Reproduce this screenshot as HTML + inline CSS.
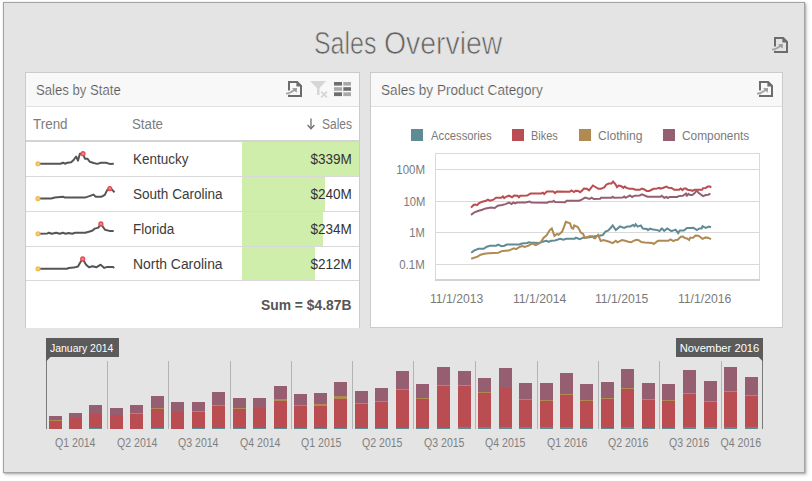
<!DOCTYPE html>
<html><head><meta charset="utf-8"><title>Sales Overview</title><style>
html,body{margin:0;padding:0;background:#ffffff;width:812px;height:481px;overflow:hidden;position:relative;font-family:"Liberation Sans", sans-serif;}
#frame{position:absolute;left:3px;top:2px;width:802px;height:471px;box-sizing:border-box;border:1px solid #a3a3a3;background:#e4e4e4;box-shadow:1px 1px 2px rgba(0,0,0,0.25),2px 2px 4px rgba(0,0,0,0.12),0 0 2px rgba(0,0,0,0.08);}
.t{position:absolute;white-space:nowrap;line-height:1;font-family:"Liberation Sans", sans-serif;}
.panel{position:absolute;box-sizing:border-box;border:1px solid #cbcbcb;background:#ffffff;}
.phead{position:absolute;background:#f8f8f8;border-bottom:1px solid #e0e0e0;box-sizing:content-box;}
.hl{position:absolute;}
</style></head><body>
<div id="frame"></div>
<div class="t" style="left:313.60px;top:28.00px;font-size:31px;color:#606060;font-weight:400;transform:scaleX(0.8040);transform-origin:0 0;-webkit-text-stroke:0.7px #e4e4e4;">Sales</div>
<div class="t" style="left:384.40px;top:28.00px;font-size:31px;color:#606060;font-weight:400;transform:scaleX(0.9160);transform-origin:0 0;-webkit-text-stroke:0.7px #e4e4e4;">Overview</div>
<svg style="position:absolute;left:772px;top:37px" width="18" height="17" viewBox="0 0 18 17"><path d="M3,9.6 V1 H11.2 L15,4.8 V15 H3 V13.8" fill="none" stroke="#6c6c6c" stroke-width="2" stroke-linejoin="miter"/><polygon points="10.4,0 16,5.6 10.4,5.6" fill="#6c6c6c"/><path d="M0,12.7 C3.5,12.5 6.2,10.9 8.8,8.8" fill="none" stroke="#a6a6a6" stroke-width="2"/><polygon points="6,7.2 11,6.9 10.6,11.8" fill="#999999"/></svg>
<div class="panel" style="left:25px;top:72px;width:335px;height:256px;border-bottom:none"></div>
<div class="phead" style="left:26px;top:73px;width:333px;height:33px"></div>
<div class="t" style="left:36.40px;top:83.00px;font-size:14px;color:#555555;font-weight:400;transform:scaleX(0.9382);transform-origin:0 0;-webkit-text-stroke:0.2px #f8f8f8;">Sales by State</div>
<svg style="position:absolute;left:286px;top:81px" width="18" height="17" viewBox="0 0 18 17"><path d="M3,9.6 V1 H11.2 L15,4.8 V15 H3 V13.8" fill="none" stroke="#6c6c6c" stroke-width="2" stroke-linejoin="miter"/><polygon points="10.4,0 16,5.6 10.4,5.6" fill="#6c6c6c"/><path d="M0,12.7 C3.5,12.5 6.2,10.9 8.8,8.8" fill="none" stroke="#a6a6a6" stroke-width="2"/><polygon points="6,7.2 11,6.9 10.6,11.8" fill="#999999"/></svg>
<svg style="position:absolute;left:309px;top:80px" width="20" height="19" viewBox="0 0 20 19"><polygon points="1,1 17,1 10.5,8 10.5,15 8,15 8,8" fill="#d6d6d6"/><path d="M12.2,11.6 L18,17.4 M18,11.6 L12.2,17.4" stroke="#d6d6d6" stroke-width="1.7"/></svg>
<svg style="position:absolute;left:333px;top:82px" width="19" height="15" viewBox="0 0 19 15"><rect x="1" y="0" width="8" height="3.6" fill="#6e6e6e"/><rect x="10.3" y="0" width="7.7" height="3.6" fill="#a9a9a9"/><rect x="1" y="5.2" width="8" height="3.6" fill="#a9a9a9"/><rect x="10.3" y="5.2" width="7.7" height="3.6" fill="#6e6e6e"/><rect x="1" y="10.3" width="8" height="3.8" fill="#6e6e6e"/><rect x="10.3" y="10.3" width="7.7" height="3.8" fill="#a9a9a9"/></svg>
<div class="t" style="left:32.80px;top:117.00px;font-size:14px;color:#7d7d7d;font-weight:400;transform:scaleX(0.9595);transform-origin:0 0;">Trend</div>
<div class="t" style="left:132.30px;top:117.00px;font-size:14px;color:#7d7d7d;font-weight:400;transform:scaleX(0.9480);transform-origin:0 0;">State</div>
<div class="t" style="right:460.30px;top:117.00px;font-size:14px;color:#7d7d7d;font-weight:400;transform:scaleX(0.8564);transform-origin:100% 0;">Sales</div>
<svg style="position:absolute;left:306px;top:118px" width="10" height="12" viewBox="0 0 10 12"><path d="M5,0.5 V10" stroke="#6e6e6e" stroke-width="1.3"/><path d="M1.6,7 L5,10.8 L8.4,7" fill="none" stroke="#6e6e6e" stroke-width="1.3"/></svg>
<div class="hl" style="left:26px;top:140px;width:333px;height:2px;background:#d4d4d4"></div>
<div class="hl" style="left:242px;top:142px;width:117px;height:34px;background:#d0eeab"></div>
<div class="hl" style="left:26px;top:176px;width:333px;height:1px;background:#d9d9d9"></div>
<div class="t" style="left:132.70px;top:152.00px;font-size:14px;color:#3b3b3b;font-weight:400;transform:scaleX(0.9620);transform-origin:0 0;">Kentucky</div>
<div class="t" style="right:460.60px;top:152.00px;font-size:14px;color:#333333;font-weight:400;transform:scaleX(0.9671);transform-origin:100% 0;">$339M</div>
<div class="hl" style="left:242px;top:177px;width:83px;height:34px;background:#d0eeab"></div>
<div class="hl" style="left:26px;top:211px;width:333px;height:1px;background:#d9d9d9"></div>
<div class="t" style="left:132.70px;top:187.00px;font-size:14px;color:#3b3b3b;font-weight:400;transform:scaleX(0.9674);transform-origin:0 0;">South Carolina</div>
<div class="t" style="right:460.60px;top:187.00px;font-size:14px;color:#333333;font-weight:400;transform:scaleX(0.9671);transform-origin:100% 0;">$240M</div>
<div class="hl" style="left:242px;top:212px;width:81px;height:34px;background:#d0eeab"></div>
<div class="hl" style="left:26px;top:246px;width:333px;height:1px;background:#d9d9d9"></div>
<div class="t" style="left:132.70px;top:222.00px;font-size:14px;color:#3b3b3b;font-weight:400;transform:scaleX(0.9626);transform-origin:0 0;">Florida</div>
<div class="t" style="right:460.60px;top:222.00px;font-size:14px;color:#333333;font-weight:400;transform:scaleX(0.9671);transform-origin:100% 0;">$234M</div>
<div class="hl" style="left:242px;top:247px;width:73px;height:33px;background:#d0eeab"></div>
<div class="t" style="left:132.70px;top:257.00px;font-size:14px;color:#3b3b3b;font-weight:400;transform:scaleX(0.9926);transform-origin:0 0;">North Carolina</div>
<div class="t" style="right:460.60px;top:257.00px;font-size:14px;color:#333333;font-weight:400;transform:scaleX(0.9671);transform-origin:100% 0;">$212M</div>
<div class="hl" style="left:26px;top:280px;width:333px;height:1px;background:#d9d9d9"></div>
<svg style="position:absolute;left:0;top:0" width="812" height="481"><path d="M37.9,163.7 L60.5,163.7 L63.0,162.7 L64.9,163.7 L67.4,162.8 L71.1,162.2 L73.6,160.0 L76.1,156.5 L78.0,160.6 L79.9,153.7 L83.0,153.7 L84.9,158.7 L87.4,158.7 L89.9,161.8 L93.6,163.0 L97.3,163.9 L101.0,162.7 L106.0,162.7 L109.8,163.9 L113.8,163.7" fill="none" stroke="#555555" stroke-width="2" stroke-linejoin="round"/><circle cx="37.9" cy="163.7" r="1.9" fill="#f4c98c" stroke="#efbb4c" stroke-width="1.3"/><circle cx="83" cy="153.7" r="1.9" fill="#ec8a8e" stroke="#e84a50" stroke-width="1.4"/><path d="M37.9,198.6 L51.2,198.4 L54.9,197.6 L63.0,196.7 L64.9,197.6 L84.9,197.6 L88.6,196.4 L93.6,194.6 L95.5,196.7 L101.7,196.7 L104.8,194.9 L107.3,189.9 L109.8,188.6 L112.3,189.9 L114.5,192.4" fill="none" stroke="#555555" stroke-width="2" stroke-linejoin="round"/><circle cx="37.9" cy="198.6" r="1.9" fill="#f4c98c" stroke="#efbb4c" stroke-width="1.3"/><circle cx="109.8" cy="188.6" r="1.9" fill="#ec8a8e" stroke="#e84a50" stroke-width="1.4"/><path d="M38.0,233.8 L47.5,233.4 L48.9,232.7 L51.8,233.8 L56.2,232.7 L59.9,233.8 L62.8,232.7 L65.7,233.8 L68.6,233.0 L72.2,233.8 L75.1,232.7 L85.3,232.7 L89.7,231.5 L92.6,230.5 L94.8,228.6 L98.4,227.6 L100.9,223.9 L105.0,229.8 L109.4,230.9 L113.7,230.9" fill="none" stroke="#555555" stroke-width="2" stroke-linejoin="round"/><circle cx="38" cy="233.8" r="1.9" fill="#f4c98c" stroke="#efbb4c" stroke-width="1.3"/><circle cx="100.9" cy="223.9" r="1.9" fill="#ec8a8e" stroke="#e84a50" stroke-width="1.4"/><path d="M38.0,268.8 L67.1,268.8 L68.6,267.9 L73.7,267.6 L78.0,266.5 L80.2,262.5 L82.7,258.9 L86.1,264.7 L89.0,267.3 L92.6,266.2 L96.3,267.3 L100.6,264.7 L104.3,267.9 L107.2,266.9 L113.0,266.9 L114.2,267.9" fill="none" stroke="#555555" stroke-width="2" stroke-linejoin="round"/><circle cx="38" cy="268.8" r="1.9" fill="#f4c98c" stroke="#efbb4c" stroke-width="1.3"/><circle cx="82.7" cy="258.9" r="1.9" fill="#ec8a8e" stroke="#e84a50" stroke-width="1.4"/></svg>
<div class="t" style="right:460.50px;top:298.00px;font-size:14px;color:#555555;font-weight:700;transform:scaleX(0.9897);transform-origin:100% 0;">Sum = $4.87B</div>
<div class="panel" style="left:370px;top:72px;width:413px;height:256px"></div>
<div class="phead" style="left:371px;top:73px;width:411px;height:33px"></div>
<div class="t" style="left:381.10px;top:83.00px;font-size:14px;color:#555555;font-weight:400;transform:scaleX(0.9716);transform-origin:0 0;-webkit-text-stroke:0.2px #f8f8f8;">Sales by Product Category</div>
<svg style="position:absolute;left:757px;top:81px" width="18" height="17" viewBox="0 0 18 17"><path d="M3,9.6 V1 H11.2 L15,4.8 V15 H3 V13.8" fill="none" stroke="#6c6c6c" stroke-width="2" stroke-linejoin="miter"/><polygon points="10.4,0 16,5.6 10.4,5.6" fill="#6c6c6c"/><path d="M0,12.7 C3.5,12.5 6.2,10.9 8.8,8.8" fill="none" stroke="#a6a6a6" stroke-width="2"/><polygon points="6,7.2 11,6.9 10.6,11.8" fill="#999999"/></svg>
<div class="hl" style="left:410.7px;top:129px;width:12px;height:12px;background:#5f8b95"></div>
<div class="t" style="left:431.00px;top:130.00px;font-size:12.5px;color:#7a7a7a;font-weight:400;transform:scaleX(0.9008);transform-origin:0 0;">Accessories</div>
<div class="hl" style="left:511.9px;top:129px;width:12px;height:12px;background:#ba4d51"></div>
<div class="t" style="left:531.30px;top:130.00px;font-size:12.5px;color:#7a7a7a;font-weight:400;transform:scaleX(0.8769);transform-origin:0 0;">Bikes</div>
<div class="hl" style="left:579px;top:129px;width:12px;height:12px;background:#af8a53"></div>
<div class="t" style="left:598.10px;top:130.00px;font-size:12.5px;color:#7a7a7a;font-weight:400;transform:scaleX(0.9702);transform-origin:0 0;">Clothing</div>
<div class="hl" style="left:663.3px;top:129px;width:12px;height:12px;background:#955f71"></div>
<div class="t" style="left:682.10px;top:130.00px;font-size:12.5px;color:#7a7a7a;font-weight:400;transform:scaleX(0.9494);transform-origin:0 0;">Components</div>
<svg style="position:absolute;left:0;top:0" width="812" height="481"><rect x="435.5" y="153.5" width="324" height="126" fill="none" stroke="#d9d9d9" stroke-width="1"/><line x1="436" x2="759" y1="169.5" y2="169.5" stroke="#d9d9d9" stroke-width="1"/><line x1="436" x2="759" y1="201.5" y2="201.5" stroke="#d9d9d9" stroke-width="1"/><line x1="436" x2="759" y1="232.5" y2="232.5" stroke="#d9d9d9" stroke-width="1"/><line x1="436" x2="759" y1="264.5" y2="264.5" stroke="#d9d9d9" stroke-width="1"/><rect x="435" y="279" width="325" height="2" fill="#d2d2d2"/><path d="M471.2,252.7 L474.4,250.4 L478.5,248.8 L483.7,248.8 L486.8,246.7 L490.0,245.7 L496.2,245.7 L498.3,244.6 L501.4,246.2 L504.5,245.7 L506.6,244.6 L519.1,244.6 L521.7,243.6 L527.4,243.1 L528.4,242.3 L530.5,242.6 L538.3,243.1 L543.5,241.5 L546.6,240.8 L548.7,241.8 L550.8,240.8 L555.0,240.5 L560.2,238.9 L563.3,239.8 L566.4,238.7 L574.7,238.7 L575.8,237.7 L579.9,239.1 L583.0,237.7 L588.2,237.4 L592.4,236.8 L595.0,236.3 L599.2,235.8 L602.8,235.0 L605.4,231.6 L608.0,230.6 L610.6,228.0 L612.7,225.4 L615.8,230.1 L620.0,226.4 L624.1,228.0 L627.2,226.6 L630.4,226.4 L633.0,224.9 L634.5,226.2 L635.6,224.2 L637.6,226.6 L640.8,225.4 L642.8,228.5 L647.0,229.0 L648.0,230.1 L650.1,228.7 L653.2,229.6 L657.4,230.1 L659.5,231.1 L661.6,228.5 L662.1,228.5 L664.2,230.8 L667.3,228.5 L671.4,231.1 L675.6,229.6 L678.2,233.2 L679.8,230.6 L683.9,230.6 L687.0,228.0 L690.2,228.0 L693.3,227.7 L696.9,230.1 L699.5,228.5 L701.6,228.5 L702.6,226.2 L705.8,228.0 L708.9,226.6 L711.0,227.3" fill="none" stroke="#5f8b95" stroke-width="2" stroke-linejoin="miter" stroke-miterlimit="2"/><path d="M471.0,207.6 L473.6,205.0 L475.3,204.6 L477.1,205.2 L478.8,203.3 L482.2,201.7 L485.3,201.1 L487.8,199.7 L490.0,200.7 L493.4,199.7 L496.0,197.7 L501.2,197.7 L502.9,196.4 L504.2,198.1 L505.9,196.8 L509.0,195.7 L512.0,197.2 L514.1,195.5 L517.6,195.8 L518.9,197.2 L520.2,195.8 L527.1,195.5 L530.5,193.6 L531.7,193.5 L541.2,193.5 L542.9,192.7 L544.2,194.1 L546.8,191.6 L553.3,191.6 L555.0,193.1 L556.7,191.6 L569.7,191.8 L571.4,190.5 L574.0,192.1 L575.7,190.7 L578.3,190.9 L580.0,192.2 L581.7,190.9 L583.9,188.6 L586.9,188.8 L589.1,190.3 L592.9,185.5 L598.4,188.8 L601.0,188.8 L604.5,187.1 L606.2,184.7 L608.8,183.6 L611.4,183.6 L613.1,181.5 L615.3,184.1 L617.0,187.1 L618.7,185.5 L620.9,186.0 L623.4,187.9 L624.7,186.6 L626.5,187.9 L629.5,188.8 L632.9,188.8 L635.5,189.8 L639.8,189.8 L642.0,188.6 L643.7,189.2 L646.7,190.9 L649.3,190.9 L653.6,188.8 L657.1,188.4 L659.2,187.8 L660.5,188.6 L663.4,187.8 L666.5,186.6 L668.6,187.8 L671.6,187.9 L674.2,189.8 L679.0,189.8 L680.7,188.6 L682.4,190.1 L684.1,188.6 L685.9,188.6 L687.6,189.7 L691.0,190.3 L692.3,190.9 L694.5,189.8 L697.1,189.8 L702.2,189.8 L703.1,188.1 L705.7,187.9 L707.8,186.6 L710.0,186.6 L711.3,187.5" fill="none" stroke="#ba4d51" stroke-width="2" stroke-linejoin="miter" stroke-miterlimit="2"/><path d="M471.2,258.7 L477.5,256.6 L480.6,254.7 L484.2,253.7 L488.9,253.3 L498.3,252.7 L502.4,250.9 L508.7,250.6 L513.9,248.3 L516.0,249.1 L520.1,246.7 L522.2,246.0 L524.8,247.0 L528.4,245.7 L530.0,244.6 L532.6,243.6 L535.7,245.2 L538.3,243.9 L540.9,242.3 L543.5,237.9 L546.6,235.3 L549.8,230.1 L551.8,228.5 L554.4,235.8 L557.0,233.9 L558.6,234.8 L562.2,231.6 L565.9,221.8 L570.0,223.3 L571.6,228.0 L573.2,228.7 L574.2,225.4 L577.8,227.0 L581.0,232.7 L583.0,233.7 L585.1,237.9 L589.3,236.3 L592.4,236.3 L594.0,238.1 L595.0,238.4 L598.1,234.8 L600.7,241.0 L603.3,240.0 L608.5,241.5 L612.7,243.1 L615.8,240.8 L617.4,242.3 L622.0,240.0 L625.2,240.8 L628.3,241.8 L631.4,242.3 L633.5,240.8 L636.6,239.8 L638.7,240.2 L641.3,242.0 L644.9,242.6 L652.2,242.9 L653.8,244.1 L657.4,241.2 L659.5,240.5 L660.0,240.8 L668.3,240.8 L670.4,239.4 L673.5,241.2 L675.6,240.0 L677.7,239.8 L680.8,236.8 L682.9,236.6 L685.0,238.1 L687.0,238.4 L689.1,240.0 L690.2,237.7 L693.3,237.7 L695.4,235.6 L698.5,235.8 L702.6,238.9 L705.8,237.4 L708.4,237.9 L711.0,239.1" fill="none" stroke="#af8a53" stroke-width="2" stroke-linejoin="miter" stroke-miterlimit="2"/><path d="M471.0,214.9 L474.5,212.3 L477.9,211.0 L482.2,209.7 L485.7,208.4 L490.9,207.6 L494.7,208.0 L497.8,205.7 L502.1,205.0 L505.5,204.1 L509.0,202.6 L511.6,204.0 L513.3,202.4 L515.0,203.4 L517.2,202.6 L525.3,202.6 L529.7,201.6 L531.4,202.6 L547.2,202.8 L549.0,201.7 L552.4,201.7 L553.7,200.7 L555.0,201.9 L565.3,202.2 L566.6,200.7 L579.1,200.7 L581.7,199.6 L585.2,197.6 L589.5,199.0 L591.6,197.6 L593.8,199.0 L600.2,198.7 L601.0,197.8 L611.4,197.8 L612.7,196.7 L614.0,197.8 L622.6,197.6 L624.3,196.6 L625.6,197.8 L627.8,196.6 L629.9,195.5 L632.1,197.0 L634.7,195.7 L639.8,195.5 L642.0,194.4 L644.6,195.5 L647.6,196.7 L660.5,196.7 L661.7,195.7 L664.3,197.8 L666.5,197.0 L667.8,198.1 L669.5,197.0 L677.2,197.0 L678.5,196.1 L682.8,195.7 L685.9,193.5 L686.7,196.1 L688.4,193.8 L690.2,195.0 L692.3,195.0 L694.5,193.3 L696.6,190.5 L698.8,193.1 L703.1,196.1 L705.7,195.0 L708.3,194.7 L710.4,193.5" fill="none" stroke="#955f71" stroke-width="2" stroke-linejoin="miter" stroke-miterlimit="2"/></svg>
<div class="t" style="right:387.00px;top:164.00px;font-size:12px;color:#7a7a7a;font-weight:400;transform:scaleX(0.9590);transform-origin:100% 0;">100M</div>
<div class="t" style="right:387.00px;top:196.00px;font-size:12px;color:#7a7a7a;font-weight:400;transform:scaleX(0.9340);transform-origin:100% 0;">10M</div>
<div class="t" style="right:387.00px;top:227.00px;font-size:12px;color:#7a7a7a;font-weight:400;transform:scaleX(0.9298);transform-origin:100% 0;">1M</div>
<div class="t" style="right:387.00px;top:259.00px;font-size:12px;color:#7a7a7a;font-weight:400;transform:scaleX(0.9554);transform-origin:100% 0;">0.1M</div>
<div class="t" style="left:430.00px;top:293.00px;font-size:12px;color:#7a7a7a;font-weight:400;transform:scaleX(1.0133);transform-origin:0 0;">11/1/2013</div>
<div class="t" style="left:512.70px;top:293.00px;font-size:12px;color:#7a7a7a;font-weight:400;transform:scaleX(1.0133);transform-origin:0 0;">11/1/2014</div>
<div class="t" style="left:595.40px;top:293.00px;font-size:12px;color:#7a7a7a;font-weight:400;transform:scaleX(1.0133);transform-origin:0 0;">11/1/2015</div>
<div class="t" style="left:678.10px;top:293.00px;font-size:12px;color:#7a7a7a;font-weight:400;transform:scaleX(1.0133);transform-origin:0 0;">11/1/2016</div>
<svg style="position:absolute;left:0;top:0" width="812" height="481"><rect x="49" y="416" width="13" height="4" fill="#955f71"/><rect x="49" y="420" width="13" height="1" fill="#af8a53"/><rect x="49" y="421" width="13" height="8" fill="#ba4d51"/><rect x="69" y="413" width="13" height="5" fill="#955f71"/><rect x="69" y="418" width="13" height="11" fill="#ba4d51"/><rect x="89" y="405" width="13" height="9" fill="#955f71"/><rect x="89" y="414" width="13" height="15" fill="#ba4d51"/><rect x="89" y="428" width="13" height="1" fill="#5f8b95"/><rect x="110" y="408" width="13" height="7" fill="#955f71"/><rect x="110" y="415" width="13" height="14" fill="#ba4d51"/><rect x="130" y="405" width="13" height="8" fill="#955f71"/><rect x="130" y="413" width="13" height="1" fill="#af8a53"/><rect x="130" y="414" width="13" height="15" fill="#ba4d51"/><rect x="151" y="396" width="13" height="12" fill="#955f71"/><rect x="151" y="408" width="13" height="1" fill="#af8a53"/><rect x="151" y="409" width="13" height="20" fill="#ba4d51"/><rect x="151" y="428" width="13" height="1" fill="#5f8b95"/><rect x="171" y="402" width="13" height="10" fill="#955f71"/><rect x="171" y="412" width="13" height="17" fill="#ba4d51"/><rect x="192" y="402" width="13" height="9" fill="#955f71"/><rect x="192" y="411" width="13" height="1" fill="#af8a53"/><rect x="192" y="412" width="13" height="17" fill="#ba4d51"/><rect x="192" y="428" width="13" height="1" fill="#5f8b95"/><rect x="212" y="392" width="13" height="13" fill="#955f71"/><rect x="212" y="405" width="13" height="1" fill="#af8a53"/><rect x="212" y="406" width="13" height="23" fill="#ba4d51"/><rect x="212" y="428" width="13" height="1" fill="#5f8b95"/><rect x="233" y="398" width="13" height="10" fill="#955f71"/><rect x="233" y="408" width="13" height="1" fill="#af8a53"/><rect x="233" y="409" width="13" height="20" fill="#ba4d51"/><rect x="233" y="428" width="13" height="1" fill="#5f8b95"/><rect x="253" y="398" width="13" height="10" fill="#955f71"/><rect x="253" y="408" width="13" height="21" fill="#ba4d51"/><rect x="253" y="428" width="13" height="1" fill="#5f8b95"/><rect x="274" y="386" width="13" height="13" fill="#955f71"/><rect x="274" y="399" width="13" height="2" fill="#af8a53"/><rect x="274" y="401" width="13" height="28" fill="#ba4d51"/><rect x="274" y="428" width="13" height="1" fill="#5f8b95"/><rect x="294" y="394" width="13" height="11" fill="#955f71"/><rect x="294" y="405" width="13" height="1" fill="#af8a53"/><rect x="294" y="406" width="13" height="23" fill="#ba4d51"/><rect x="294" y="428" width="13" height="1" fill="#5f8b95"/><rect x="314" y="393" width="13" height="11" fill="#955f71"/><rect x="314" y="404" width="13" height="2" fill="#af8a53"/><rect x="314" y="406" width="13" height="23" fill="#ba4d51"/><rect x="314" y="428" width="13" height="1" fill="#5f8b95"/><rect x="334" y="382" width="13" height="14" fill="#955f71"/><rect x="334" y="396" width="13" height="3" fill="#af8a53"/><rect x="334" y="399" width="13" height="30" fill="#ba4d51"/><rect x="334" y="428" width="13" height="1" fill="#5f8b95"/><rect x="355" y="391" width="13" height="12" fill="#955f71"/><rect x="355" y="403" width="13" height="1" fill="#af8a53"/><rect x="355" y="404" width="13" height="25" fill="#ba4d51"/><rect x="355" y="428" width="13" height="1" fill="#5f8b95"/><rect x="375" y="388" width="13" height="13" fill="#955f71"/><rect x="375" y="401" width="13" height="1" fill="#af8a53"/><rect x="375" y="402" width="13" height="27" fill="#ba4d51"/><rect x="375" y="428" width="13" height="1" fill="#5f8b95"/><rect x="396" y="371" width="13" height="18" fill="#955f71"/><rect x="396" y="389" width="13" height="1" fill="#af8a53"/><rect x="396" y="390" width="13" height="39" fill="#ba4d51"/><rect x="396" y="428" width="13" height="1" fill="#5f8b95"/><rect x="416" y="384" width="13" height="14" fill="#955f71"/><rect x="416" y="398" width="13" height="1" fill="#af8a53"/><rect x="416" y="399" width="13" height="30" fill="#ba4d51"/><rect x="416" y="428" width="13" height="1" fill="#5f8b95"/><rect x="437" y="367" width="13" height="18" fill="#955f71"/><rect x="437" y="385" width="13" height="1" fill="#af8a53"/><rect x="437" y="386" width="13" height="43" fill="#ba4d51"/><rect x="437" y="428" width="13" height="1" fill="#5f8b95"/><rect x="458" y="371" width="13" height="14" fill="#955f71"/><rect x="458" y="385" width="13" height="1" fill="#af8a53"/><rect x="458" y="386" width="13" height="43" fill="#ba4d51"/><rect x="458" y="427" width="13" height="2" fill="#5f8b95"/><rect x="478" y="378" width="13" height="14" fill="#955f71"/><rect x="478" y="392" width="13" height="1" fill="#af8a53"/><rect x="478" y="393" width="13" height="36" fill="#ba4d51"/><rect x="478" y="427" width="13" height="2" fill="#5f8b95"/><rect x="499" y="368" width="13" height="20" fill="#955f71"/><rect x="499" y="388" width="13" height="41" fill="#ba4d51"/><rect x="499" y="427" width="13" height="2" fill="#5f8b95"/><rect x="519" y="383" width="13" height="16" fill="#955f71"/><rect x="519" y="399" width="13" height="1" fill="#af8a53"/><rect x="519" y="400" width="13" height="29" fill="#ba4d51"/><rect x="519" y="427" width="13" height="2" fill="#5f8b95"/><rect x="540" y="383" width="13" height="17" fill="#955f71"/><rect x="540" y="400" width="13" height="1" fill="#af8a53"/><rect x="540" y="401" width="13" height="28" fill="#ba4d51"/><rect x="540" y="427" width="13" height="2" fill="#5f8b95"/><rect x="560" y="373" width="13" height="21" fill="#955f71"/><rect x="560" y="394" width="13" height="1" fill="#af8a53"/><rect x="560" y="395" width="13" height="34" fill="#ba4d51"/><rect x="560" y="427" width="13" height="2" fill="#5f8b95"/><rect x="580" y="384" width="13" height="16" fill="#955f71"/><rect x="580" y="400" width="13" height="1" fill="#af8a53"/><rect x="580" y="401" width="13" height="28" fill="#ba4d51"/><rect x="580" y="428" width="13" height="1" fill="#5f8b95"/><rect x="601" y="382" width="13" height="16" fill="#955f71"/><rect x="601" y="398" width="13" height="1" fill="#af8a53"/><rect x="601" y="399" width="13" height="30" fill="#ba4d51"/><rect x="601" y="428" width="13" height="1" fill="#5f8b95"/><rect x="621" y="369" width="13" height="19" fill="#955f71"/><rect x="621" y="388" width="13" height="1" fill="#af8a53"/><rect x="621" y="389" width="13" height="40" fill="#ba4d51"/><rect x="621" y="427" width="13" height="2" fill="#5f8b95"/><rect x="642" y="383" width="13" height="16" fill="#955f71"/><rect x="642" y="399" width="13" height="1" fill="#af8a53"/><rect x="642" y="400" width="13" height="29" fill="#ba4d51"/><rect x="642" y="428" width="13" height="1" fill="#5f8b95"/><rect x="662" y="384" width="13" height="16" fill="#955f71"/><rect x="662" y="400" width="13" height="1" fill="#af8a53"/><rect x="662" y="401" width="13" height="28" fill="#ba4d51"/><rect x="662" y="428" width="13" height="1" fill="#5f8b95"/><rect x="683" y="370" width="13" height="23" fill="#955f71"/><rect x="683" y="393" width="13" height="1" fill="#af8a53"/><rect x="683" y="394" width="13" height="35" fill="#ba4d51"/><rect x="683" y="427" width="13" height="2" fill="#5f8b95"/><rect x="704" y="381" width="13" height="20" fill="#955f71"/><rect x="704" y="401" width="13" height="1" fill="#af8a53"/><rect x="704" y="402" width="13" height="27" fill="#ba4d51"/><rect x="704" y="427" width="13" height="2" fill="#5f8b95"/><rect x="724" y="367" width="13" height="24" fill="#955f71"/><rect x="724" y="391" width="13" height="1" fill="#af8a53"/><rect x="724" y="392" width="13" height="37" fill="#ba4d51"/><rect x="724" y="427" width="13" height="2" fill="#5f8b95"/><rect x="745" y="377" width="13" height="18" fill="#955f71"/><rect x="745" y="395" width="13" height="1" fill="#af8a53"/><rect x="745" y="396" width="13" height="33" fill="#ba4d51"/><rect x="745" y="427" width="13" height="2" fill="#5f8b95"/><line x1="107.50" x2="107.50" y1="361" y2="429" stroke="#b3b3b3" stroke-width="1"/><line x1="168.50" x2="168.50" y1="361" y2="429" stroke="#b3b3b3" stroke-width="1"/><line x1="230.50" x2="230.50" y1="361" y2="429" stroke="#b3b3b3" stroke-width="1"/><line x1="291.50" x2="291.50" y1="361" y2="429" stroke="#b3b3b3" stroke-width="1"/><line x1="352.50" x2="352.50" y1="361" y2="429" stroke="#b3b3b3" stroke-width="1"/><line x1="413.50" x2="413.50" y1="361" y2="429" stroke="#b3b3b3" stroke-width="1"/><line x1="475.50" x2="475.50" y1="361" y2="429" stroke="#b3b3b3" stroke-width="1"/><line x1="537.50" x2="537.50" y1="361" y2="429" stroke="#b3b3b3" stroke-width="1"/><line x1="598.50" x2="598.50" y1="361" y2="429" stroke="#b3b3b3" stroke-width="1"/><line x1="659.50" x2="659.50" y1="361" y2="429" stroke="#b3b3b3" stroke-width="1"/><line x1="721.50" x2="721.50" y1="361" y2="429" stroke="#b3b3b3" stroke-width="1"/><line x1="46.5" x2="46.5" y1="357" y2="429" stroke="#7a7a7a" stroke-width="1"/><line x1="762.5" x2="762.5" y1="357" y2="429" stroke="#7a7a7a" stroke-width="1"/><rect x="46" y="338" width="73" height="19" fill="#5b5b5b"/><polygon points="46,357 50.5,357 46,361.5" fill="#5b5b5b"/><rect x="676" y="338" width="87" height="19" fill="#5b5b5b"/><polygon points="763,357 758.5,357 763,361.5" fill="#5b5b5b"/></svg>
<div class="t" style="left:50.00px;top:343.00px;font-size:11px;color:#ffffff;font-weight:400;transform:scaleX(0.9510);transform-origin:0 0;">January 2014</div>
<div class="t" style="right:52.50px;top:343.00px;font-size:11px;color:#ffffff;font-weight:400;transform:scaleX(1.0157);transform-origin:100% 0;">November 2016</div>
<div class="t" style="left:55.49px;top:437.00px;font-size:12px;color:#808080;font-weight:400;transform:scaleX(0.8795);transform-origin:0 0;">Q1 2014</div>
<div class="t" style="left:116.87px;top:437.00px;font-size:12px;color:#808080;font-weight:400;transform:scaleX(0.8795);transform-origin:0 0;">Q2 2014</div>
<div class="t" style="left:178.25px;top:437.00px;font-size:12px;color:#808080;font-weight:400;transform:scaleX(0.8795);transform-origin:0 0;">Q3 2014</div>
<div class="t" style="left:239.63px;top:437.00px;font-size:12px;color:#808080;font-weight:400;transform:scaleX(0.8795);transform-origin:0 0;">Q4 2014</div>
<div class="t" style="left:301.01px;top:437.00px;font-size:12px;color:#808080;font-weight:400;transform:scaleX(0.8795);transform-origin:0 0;">Q1 2015</div>
<div class="t" style="left:362.39px;top:437.00px;font-size:12px;color:#808080;font-weight:400;transform:scaleX(0.8795);transform-origin:0 0;">Q2 2015</div>
<div class="t" style="left:423.77px;top:437.00px;font-size:12px;color:#808080;font-weight:400;transform:scaleX(0.8795);transform-origin:0 0;">Q3 2015</div>
<div class="t" style="left:485.15px;top:437.00px;font-size:12px;color:#808080;font-weight:400;transform:scaleX(0.8795);transform-origin:0 0;">Q4 2015</div>
<div class="t" style="left:546.53px;top:437.00px;font-size:12px;color:#808080;font-weight:400;transform:scaleX(0.8795);transform-origin:0 0;">Q1 2016</div>
<div class="t" style="left:607.91px;top:437.00px;font-size:12px;color:#808080;font-weight:400;transform:scaleX(0.8795);transform-origin:0 0;">Q2 2016</div>
<div class="t" style="left:669.29px;top:437.00px;font-size:12px;color:#808080;font-weight:400;transform:scaleX(0.8795);transform-origin:0 0;">Q3 2016</div>
<div class="t" style="right:51.00px;top:437.00px;font-size:12px;color:#808080;font-weight:400;transform:scaleX(0.8795);transform-origin:100% 0;">Q4 2016</div>
</body></html>
